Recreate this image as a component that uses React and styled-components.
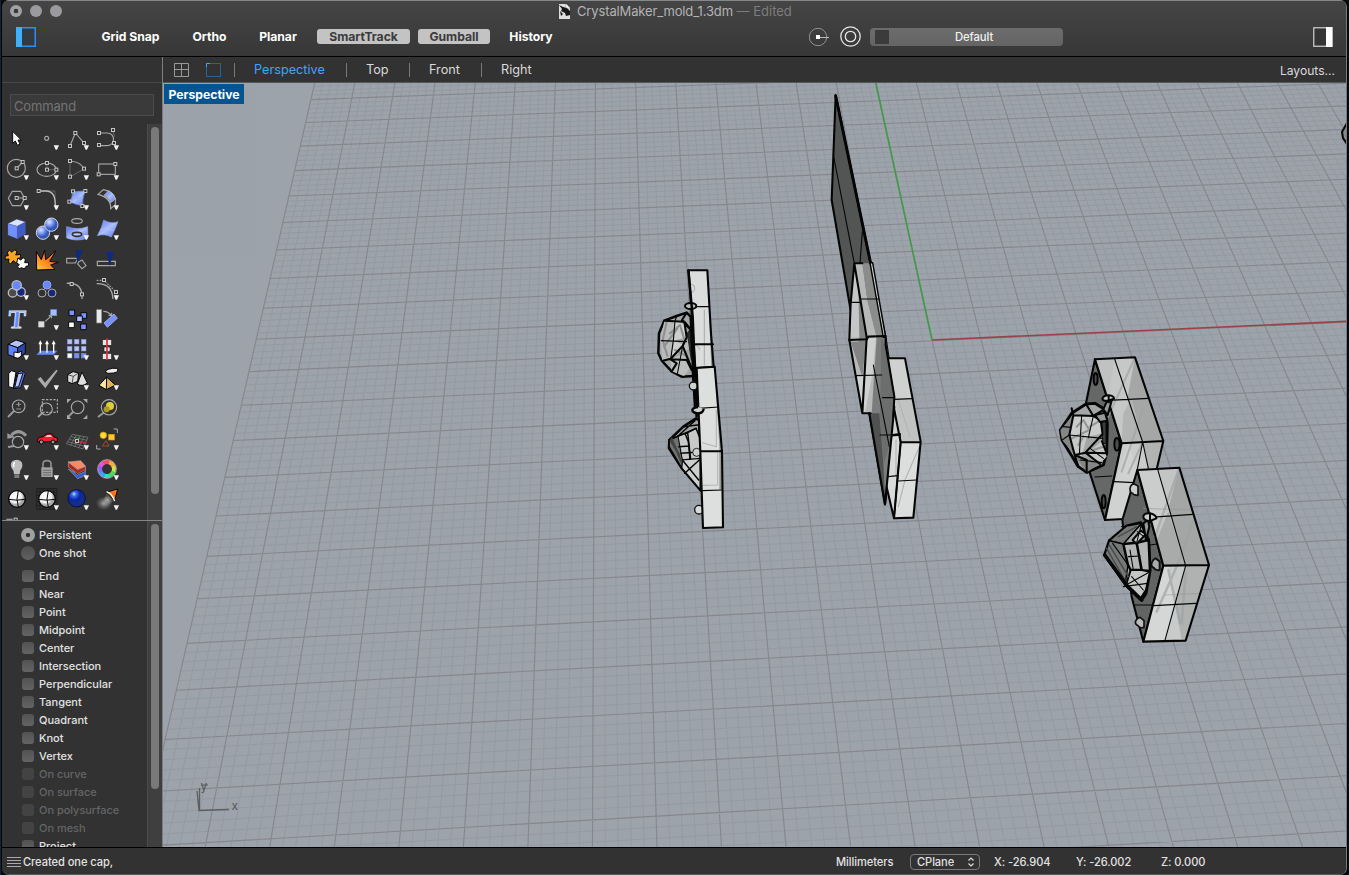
import React from "react";
import styled, { createGlobalStyle } from "styled-components";

const Global = createGlobalStyle`
  * { box-sizing: border-box; }
  body { margin: 0; background: #10151f; overflow: hidden; }
  body, button { font-family: Inter, "Liberation Sans", sans-serif; }
`;

const Desktop = styled.div`
  width: 1349px; height: 875px; padding: 0 2px 0 2px; overflow: hidden;
  background: linear-gradient(90deg, #13233b 0 1px, #0a0c10 1px);
`;
const Window = styled.div`
  width: 1345px; height: 875px; display: flex; flex-direction: column;
  background: #323232; border-radius: 7px; overflow: hidden;
  box-shadow: 0 0 0 1px #050505;
  border-bottom: 1px solid #5a5a5a; border-right: 1px solid #77797a;
`;
const Chrome = styled.header`
  height: 57px; flex: none; border-top: 1px solid #858888; border-bottom: 1px solid #000;
  background: linear-gradient(#454545, #373737);
`;
const TitleRow = styled.div`
  height: 20px; display: flex; align-items: center;
`;
const Lights = styled.div`display: flex; gap: 8px; padding-left: 8px;`;
const Light = styled.span`
  width: 12px; height: 12px; border-radius: 50%;
  background: ${(p) => (p.$dot ? "radial-gradient(circle, #38383a 0 2px, #a1a1a4 2.6px)" : "#9b9b9f")};
`;
const Title = styled.div`
  display: flex; align-items: center; height: 20px; margin-left: 496px; white-space: pre;
  font-size: 13px; letter-spacing: -0.14px; color: #b3b3b3;
  svg { margin-right: 6px; }
  span { color: #7d7d7d; letter-spacing: 0; }
`;
const ToolRow = styled.div`height: 31px; display: flex; align-items: center;`;
const Slot = styled.div`
  width: ${(p) => p.$w}px; margin-left: ${(p) => p.$gap || 0}px; height: 20px;
  display: flex; align-items: center; flex: none;
`;
const Toggle = styled.button`
  width: ${(p) => p.$w}px; margin: 0 0 0 ${(p) => p.$gap}px; flex: none; height: 15px; border: 0; padding: 0;
  border-radius: 3px; background: ${(p) => (p.$on ? "#c3c3c3" : "transparent")};
  color: ${(p) => (p.$on ? "#3b3b3b" : "#fff")};
  font-size: 12.2px; line-height: 15px; font-weight: 700; letter-spacing: -0.04px; white-space: nowrap;
`;
const LayerSelect = styled.div`
  width: 193px; height: 18px; margin-left: 9.5px; flex: none; border-radius: 4px; background: linear-gradient(#6c6c6c, #646464);
  display: flex; align-items: center; padding-left: 5px; font-size: 11.3px; font-weight: 500; color: #f0f0f0;
  i { width: 14px; height: 14px; background: #3b3b3b; }
  span { width: 170px; text-align: center; letter-spacing: -0.1px; }
`;
const Main = styled.div`display: flex; height: 790px; flex: none;`;
const Side = styled.aside`
  width: 161px; flex: none; display: flex; flex-direction: column; border-right: 1px solid #7d7d7d; background: #323232;
`;
const SideHead = styled.div`height: 26px; flex: none; border-bottom: 1px solid #484848;`;
const CommandArea = styled.div`height: 41px; flex: none; padding: 11px 8px 0 8px;`;
const Command = styled.div`
  width: 144px; height: 22px; border: 1px solid #4b4b4b; background: #3a3a3a; padding-left: 3px;
  color: #747474; font-size: 13px; line-height: 23px; letter-spacing: -0.15px;
`;
const ScrollPane = styled.div`
  height: ${(p) => p.$h}px; flex: none; display: flex; overflow: hidden;
  border-bottom: ${(p) => (p.$line ? "1px solid #858585" : "0")};
`;
const PaneBody = styled.div`width: 145px; flex: none; overflow: hidden;`;
const Track = styled.div`
  width: 15px; border-left: 1px solid #4c4c4c; background: #3f3f3f; padding: ${(p) => p.$top}px 0 0 3px;
`;
const Thumb = styled.div`width: 8px; height: ${(p) => p.$h}px; border-radius: 4px; background: #797979;`;
const IconGrid = styled.div`
  display: grid; grid-template-columns: repeat(4, 30px); grid-auto-rows: 30px;
  svg { display: block; }
`;
const Osnaps = styled.div`padding: 5px 0 0 19px;`;
const SnapRow = styled.div`
  height: 18px; margin-bottom: ${(p) => p.$after || 0}px; display: flex; align-items: center;
  font-size: 11px; line-height: 19px; font-weight: 500; letter-spacing: -0.03px; color: ${(p) => (p.$off ? "#656565" : "#e2e2e2")};
`;
const Box = styled.span`
  width: 12px; height: 12px; margin: 0 5px 0 1px; border-radius: 3px;
  background: ${(p) => (p.$off ? "#434343" : "linear-gradient(#525252, #646464)")};
`;
const Radio = styled.span`
  width: 14px; height: 14px; margin-right: 4px; border-radius: 50%;
  background: ${(p) => (p.$on ? "radial-gradient(circle, #2c2c2c 0 1.8px, #a0a0a0 2.5px)" : "linear-gradient(#4e4e4e, #616161)")};
`;
const Work = styled.section`width: 1183px; flex: none; display: flex; flex-direction: column;`;
const Tabs = styled.nav`
  height: 26px; flex: none; display: flex; align-items: center; background: #323232; border-bottom: 1px solid #55585a;
  color: #dadada; font-size: 12.7px;
  svg { flex: none; }
`;
const Tab = styled.span`
  width: ${(p) => p.$w}px; margin-left: ${(p) => p.$gap}px; flex: none; white-space: nowrap;
  color: ${(p) => (p.$on ? "#3aa7fb" : "#dadada")};
`;
const Sep = styled.span`width: 1px; height: 14px; margin-left: ${(p) => p.$gap}px; background: #777; flex: none;`;
const Layouts = styled.span`margin-left: auto; padding-right: 11px; font-size: 12.1px; padding-top: 2px;`;
const View = styled.div`position: relative; height: 764px; background: #9da3aa; svg { display: block; }`;
const ViewName = styled.div`
  position: absolute; left: 1px; top: 1px; width: 80px; height: 20px; background: #04548f; color: #fff;
  font-size: 12.2px; font-weight: 700; line-height: 21px; text-align: center; letter-spacing: 0;
`;
const Status = styled.footer`
  height: 28px; flex: none; border-top: 1px solid #000; background: #323232; display: flex; align-items: center;
  color: #e2e2e2; font-size: 11.1px; font-weight: 500; padding-left: 5px; padding-top: 1px; white-space: nowrap;
  letter-spacing: -0.06px;
`;
const Lines = styled.span`
  width: 14px; height: 11px; margin-right: 2px;
  background: repeating-linear-gradient(#a9a9a9 0 1px, transparent 1px 3px);
`;
const CPlane = styled.div`
  width: 70px; height: 16px; flex: none; border: 1px solid #7a7a7a; border-radius: 4px; display: flex; align-items: center;
  justify-content: space-between; padding: 0 4px 0 6px;
`;

/* ---- tool icons: 90 x 90 units in a 30px cell ---- */
const S = ({ x, y }) => <rect x={x - 4.5} y={y - 4.5} width="9" height="9" fill="#323232" stroke="#c4c4c4" strokeWidth="3" />;
const g = { fill: "none", stroke: "#a8a8a8", strokeWidth: 3.4 };
const dim = { fill: "none", stroke: "#6b6b6b", strokeWidth: 2.5 };
const k = { stroke: "#080808", strokeWidth: 3, strokeLinejoin: "round" };
const Lens = ({ x = 50, y = 37, r = 19 }) => (
  <g><path d={`M${x - r * 0.7} ${y + r * 0.7} L18 69`} stroke="#999" strokeWidth="6" /><circle cx={x} cy={y} r={r} {...g} /></g>
);

const icons = [
  [<path d="M32 22V58L40 51L46 64L54 60L48 48H58Z" fill="#fff" {...k} />, 0],
  [<circle cx="44" cy="43" r="6" {...g} />, 1],
  [<g><path d="M24 66L40 27L66 57" {...g} /><S x={24} y={66} /><S x={40} y={27} /><S x={66} y={57} /></g>, 1],
  [<g><path d="M26 27H46C70 27 72 64 44 65H26" {...g} /><path d="M62 20L68 38" {...dim} /><S x={21} y={27} /><S x={63} y={18} /><S x={21} y={63} /><S x={66} y={57} /></g>, 1],

  [<g><circle cx="43" cy="43" r="27" {...g} /><path d="M44 43L62 24" {...g} /><S x={44} y={43} /><S x={62} y={24} /></g>, 1],
  [<g><ellipse cx="44" cy="47" rx="29" ry="20" {...g} /><path d="M45 27V47H72" {...dim} /><S x={45} y={27} /><S x={45} y={47} /><S x={73} y={47} /></g>, 1],
  [<g><path d="M24 21C44 23 60 31 66 44" {...g} /><path d="M66 44L24 69V21" {...dim} /><S x={24} y={21} /><S x={66} y={44} /><S x={24} y={68} /></g>, 1],
  [<g><rect x="20" y="30" width="50" height="31" {...g} /><S x={70} y={30} /><S x={20} y={61} /></g>, 1],

  [<g><path d="M31 22H56L68 43L56 65H31L19 43Z" {...g} /><path d="M44 42H68" {...g} /><S x={44} y={42} /><S x={68} y={42} /></g>, 1],
  [<g><path d="M25 21H69V66" {...dim} /><path d="M25 21H42C64 22 70 38 70 66" fill="none" stroke="#bcbcbc" strokeWidth="4" /><S x={20} y={21} /></g>, 1],
  [<g><path d="M32 23L70 21Q60 42 62 66Q44 62 23 54Q32 40 32 23Z" fill="url(#blue)" stroke="#6f86ee" strokeWidth="2" /><path d="M29 38Q46 44 65 42M50 22Q46 45 42 61" stroke="#8ea5f8" strokeWidth="2" fill="none" /><S x={33} y={22} /><S x={70} y={21} /><S x={61} y={66} /><S x={22} y={53} /></g>, 1],
  [<g><path d="M18 31L34 17Q62 22 70 44V62L56 74Q58 42 18 31Z" {...g} /><path d="M36 34L50 20Q66 28 70 45L56 56Q52 42 36 34Z" fill="url(#blue)" stroke="#ccc" strokeWidth="2" /></g>, 1],

  [<g stroke="#5a6dba" strokeWidth="1"><path d="M18 29L44 16L70 24L46 37Z" fill="#dbe3ff" /><path d="M18 29L46 37V74L18 63Z" fill="#7390ff" /><path d="M46 37L70 24V60L46 74Z" fill="#3f5cc6" /></g>, 1],
  [<g stroke="#d7d7d7" strokeWidth="3"><circle cx="33" cy="56" r="20" fill="url(#ball)" /><circle cx="58" cy="32" r="20" fill="url(#ball)" /></g>, 1],
  [<g><ellipse cx="45" cy="21" rx="16" ry="7" {...g} /><path d="M14 38Q46 50 77 38V72Q46 84 14 72Z" fill="url(#blue)" stroke="#9eb0f7" strokeWidth="2" /><ellipse cx="45" cy="61" rx="14" ry="6" fill="#bfcaff" stroke="#333" strokeWidth="5" /></g>, 1],
  [<g><path d="M35 18Q56 31 78 23Q70 45 58 69Q37 58 16 65Q29 44 35 18Z" fill="url(#blue)" stroke="#8298f2" strokeWidth="2" /><path d="M24 46Q44 40 66 50" fill="none" stroke="#b4c3ff" strokeWidth="2" /></g>, 1],

  [<g {...k}><path d="M22 18l8 7 8-8 7 6-4 10 14-2 1 10-10 3 4 9-9 3-7-6-8 10-7-5 2-10-12 1 1-10 9-1-3-9Z" fill="#f5a623" /><path d="M48 42l8 6 8-7 6 6-2 9 11 0 1 9-8 2-5 8-8-4-8 3-4-6 5-6-8-5 2-8Z" fill="#fff" /></g>, 0],
  [<path d="M13 22L28 47L38 18L41 47L72 20L53 52L79 55L56 63L69 76L14 78Z" fill="url(#fire)" {...k} />, 0],
  [<g><path d="M14 43H48L40 57H14Z" {...g} /><path d="M50 54L60 48L72 65L60 74L47 60Z" {...g} /><path d="M40 18H64L46 56Z" fill="#102a7c" /></g>, 0],
  [<g><path d="M16 52H70V65H16Z" {...g} /><path d="M43 24H66L53 66Z" fill="#102a7c" /></g>, 0],

  [<g stroke="#bdbdbd" strokeWidth="4"><circle cx="32" cy="56" r="13" fill="#4b4b4b" /><circle cx="57" cy="54" r="13" fill="#16267b" /><circle cx="44" cy="34" r="14" fill="#6687ff" /></g>, 1],
  [<g stroke="#aaa" strokeWidth="3"><circle cx="45" cy="33" r="12" fill="#6687ff" stroke="#8ba3ff" /><circle cx="30" cy="57" r="12" fill="none" /><circle cx="60" cy="57" r="12" fill="#16267b" /></g>, 0],
  [<g><path d="M14 28C48 26 62 42 60 75" fill="none" stroke="#aaa" strokeWidth="4" /><S x={29} y={30} /><S x={60} y={61} /></g>, 0],
  [<g><path d="M14 29C50 29 61 46 63 75" fill="none" stroke="#aaa" strokeWidth="4" /><path d="M14 19H36L72 54V74" {...g} strokeDasharray="5 4" /><S x={36} y={18} /><S x={72} y={54} /></g>, 1],

  [<text x="49" y="72" textAnchor="middle" fontFamily="Liberation Serif, serif" fontWeight="bold" fontSize="78" fill="#668aff" stroke="#dfe6ff" strokeWidth="2.5" transform="skewX(-5)">T</text>, 0],
  [<g><path d="M40 52L59 34M59 34l-9 1m9-1l-1 9" {...g} /><rect x="19" y="52" width="18" height="18" fill="#ddd" /><rect x="56" y="17" width="18" height="18" fill="#a9bbff" stroke="#718df4" strokeWidth="2" /></g>, 1],
  [<g {...k} strokeWidth="3"><rect x="21" y="18" width="17" height="17" fill="#7693ff" /><rect x="57" y="26" width="17" height="17" fill="#7693ff" /><rect x="44" y="36" width="17" height="17" fill="#a9bcff" /><rect x="20" y="54" width="17" height="17" fill="#fff" /><rect x="56" y="60" width="17" height="17" fill="#7693ff" /></g>, 0],
  [<g><rect x="14" y="17" width="15" height="40" fill="#e9e9e9" stroke="#888" strokeWidth="2" /><path d="M34 22Q50 22 59 36M59 36v-10m0 10l-10-3" {...g} /><path d="M66 30L76 43L46 70L36 57Z" fill="#7790ff" stroke="#b9c5ff" strokeWidth="2" /></g>, 0],

  [<g {...k}><path d="M18 31L42 18L70 27L47 41Z" fill="#b2c2ff" /><path d="M18 31L47 41V73L18 62Z" fill="#5f82ff" /><path d="M47 41L70 27V57L47 73Z" fill="#2946a1" /><path d="M36 54L50 56L58 51V66L48 73L36 70Z" fill="#fff" /></g>, 1],
  [<g><path d="M13 62L25 50H76L66 62Z" fill="#6888ff" /><path d="M25 56V25M45 56V25M65 56V25" stroke="#fff" strokeWidth="4" /><path d="M19 31L25 19L31 31ZM39 31L45 19L51 31ZM59 31L65 19L71 31Z" fill="#fff" /></g>, 1],
  [<g>{[0, 1, 2].map((r) => [0, 1, 2].map((c) => <rect key={r * 3 + c} x={16 + c * 21} y={16 + r * 21} width="14" height="14" fill={r === 2 && c === 0 ? "#fff" : r === 2 ? "#7690f5" : "#b7c4f8"} stroke="#7f8ed0" strokeWidth="1.5" />))}</g>, 1],
  [<g><g fill="#e6e6e6" stroke="#222" strokeWidth="2"><rect x="31" y="17" width="28" height="17" /><rect x="36" y="39" width="18" height="14" /><rect x="31" y="58" width="28" height="18" /></g><path d="M45 13V78" stroke="#db2d36" strokeWidth="5" /></g>, 1],

  [<g {...k}><path d="M20 29L28 20L42 24L34 72L20 68Z" fill="#f5f5f5" /><path d="M46 26L58 20L70 28L56 71L34 74Z" fill="#5f80ff" /><path d="M48 29L63 27L50 68L38 70Z" fill="#b9c8ff" /></g>, 1],
  [<path d="M17 45L26 39L39 56L73 17L77 20L40 73Z" fill="#aaa" />, 1],
  [<g {...k}><path d="M17 32L33 23L50 27L47 52L30 59L17 53Z" fill="#d7d7d7" /><path d="M17 32L34 37L50 27M34 37L30 59" fill="none" strokeWidth="2" /><path d="M60 24L76 57Q60 70 46 60Z" fill="#ddd" /></g>, 1],
  [<g {...k}><path d="M39 24L48 16L62 13H77V23L65 27L48 28Z" fill="#eee" /><path d="M44 39L70 63L43 77L21 64Z" fill="#e0b44f" /><path d="M44 39L43 77L21 64Z" fill="#ffe59c" /></g>, 1],

  [<g><Lens /><path d="M43 31H57M50 24V38M43 45H57" {...g} strokeWidth="2.5" /></g>, 0],
  [<g><rect x="31" y="17" width="45" height="38" {...g} strokeDasharray="7 4" /><Lens x={43} y={45} r={18} /></g>, 0],
  [<g><Lens x={47} y={40} r={19} /><g fill="#aaa"><path d="M15 15H28L15 28Z" /><path d="M76 15H63L76 28Z" /><path d="M15 75H28L15 62Z" /><path d="M76 75H63L76 62Z" /></g></g>, 0],
  [<g><circle cx="54" cy="36" r="12" fill="#dccf3c" /><circle cx="44" cy="46" r="9" fill="#a99c23" /><Lens x={51} y={40} r={23} /></g>, 0],

  [<g><Lens x={48} y={54} r={17} /><path d="M28 33Q50 12 72 35" fill="none" stroke="#979797" strokeWidth="9" /><path d="M16 28L40 40L16 44Z" fill="#999" /></g>, 1],
  [<g {...k}><path d="M16 49Q18 38 33 39Q43 26 60 30L66 39L76 42V53L18 54Z" fill="#ef202b" /><path d="M39 39L46 33H56L60 39Z" fill="#f9c5c5" stroke="none" /><circle cx="28" cy="54" r="6" fill="#999" /><circle cx="63" cy="54" r="6" fill="#999" /></g>, 1],
  [<g stroke="#767676" strokeWidth="2.5" fill="none"><path d="M31 31L78 40L63 75L13 59ZM27 38L75 49M22 46L70 58M17 53L66 66M43 33L26 64M55 35L38 68M66 38L50 71" /><path d="M45 52L53 34" stroke="#16a02b" /><path d="M45 52L70 56" stroke="#cf2530" strokeWidth="4" /><S x={45} y={51} /></g>, 1],
  [<g><circle cx="34" cy="34" r="10" fill="#ffdb39" stroke="#b98b00" strokeWidth="2" /><rect x="50" y="31" width="17" height="17" fill="#ffc928" stroke="#e09a00" strokeWidth="2" /><path d="M42 50L51 66H31Z" fill="none" stroke="#a5482b" strokeWidth="3" /><path d="M65 15H76V27M14 63V75H26" fill="none" stroke="#aaa" strokeWidth="3" /></g>, 1],

  [<g><path d="M44 17C23 18 23 38 34 49L36 60H53L55 49C65 38 64 18 44 17Z" fill="#bdbdbd" /><path d="M38 25Q32 31 36 40" fill="none" stroke="#fff" strokeWidth="4" /><rect x="37" y="61" width="15" height="11" fill="#7b7b7b" /></g>, 1],
  [<g><path d="M33 44V29Q33 20 45 20Q57 20 57 29V44" fill="none" stroke="#8d8d8d" strokeWidth="5" /><rect x="28" y="40" width="34" height="29" fill="#a2a2a2" /><path d="M33 49H57M33 56H57M33 63H57" stroke="#6b6b6b" strokeWidth="3" /></g>, 1],
  [<g stroke="#bcbcbc" strokeWidth="1.5"><path d="M19 45L47 74L70 64V48L43 58Z" fill="#315ad4" /><path d="M19 32L45 64L70 52V40Z" fill="#161616" /><path d="M19 23L46 48L70 37V47L47 59L19 39Z" fill="#b12317" /><path d="M19 24L56 20L70 36L47 46Z" fill="#ff8963" /></g>, 1],
  [<g fill="none" strokeWidth="12">{["#ff4960", "#ef4fd2", "#8d61ff", "#439cff", "#29dec1", "#47db51", "#c7e844", "#ffac37"].map((c, i) => { const a = (-i * Math.PI) / 4 - 1.2, b = a - 0.85; return <path key={c} stroke={c} d={`M${45 + 21 * Math.cos(a)} ${45 + 21 * Math.sin(a)}A21 21 0 0 0 ${45 + 21 * Math.cos(b)} ${45 + 21 * Math.sin(b)}`} />; })}<circle cx="45" cy="45" r="28" stroke="#ddd" strokeWidth="2" /></g>, 1],

  [<g {...k} strokeWidth="4"><circle cx="45" cy="45" r="25" fill="url(#white)" /><path d="M20 46Q45 51 70 46M49 20Q41 45 49 70" fill="none" strokeWidth="3" /></g>, 0],
  [<g><path d="M14 14H75V76H14ZM24 14V76M34 14V76M54 14V76M65 14V76M14 24H75M14 34H75M14 54H75M14 65H75" fill="none" stroke="#181818" strokeWidth="2" /><g {...k} strokeWidth="4"><circle cx="45" cy="45" r="25" fill="url(#white)" /><path d="M20 46Q45 51 70 46M49 20Q41 45 49 70" fill="none" strokeWidth="3" /></g></g>, 1],
  [<circle cx="44" cy="43" r="26" fill="url(#deep)" stroke="#08103f" strokeWidth="3" />, 1],
  [<g><ellipse cx="36" cy="58" rx="24" ry="20" fill="url(#glow)" /><path d="M45 28L66 50L44 68L27 56Z" fill="url(#glow)" /><path d="M45 24L77 15L68 50Z" fill="url(#fire)" {...k} /><path d="M44 23Q60 30 68 51" stroke="#fff" strokeWidth="4" fill="none" /></g>, 1],
  [<g><path d="M13 16H32" stroke="#999" strokeWidth="4" /><S x={41} y={17} /></g>, 0],
];

const Defs = () => (
  <svg width="0" height="0" style={{ display: "block" }}>
    <defs>
      <linearGradient id="blue" x1="0" y1="0" x2="1" y2="1"><stop offset="0" stopColor="#4d70ed" /><stop offset=".5" stopColor="#aebfff" /><stop offset="1" stopColor="#5474e7" /></linearGradient>
      <linearGradient id="fire" x1="0" y1="1" x2="1" y2="0"><stop offset="0" stopColor="#ffd02d" /><stop offset=".6" stopColor="#ff681a" /><stop offset="1" stopColor="#ff9b2d" /></linearGradient>
      <radialGradient id="ball" cx=".35" cy=".3"><stop offset="0" stopColor="#dce5ff" /><stop offset=".5" stopColor="#85a0f7" /><stop offset="1" stopColor="#3559b9" /></radialGradient>
      <radialGradient id="white" cx=".4" cy=".35"><stop offset="0" stopColor="#fff" /><stop offset=".75" stopColor="#eee" /><stop offset="1" stopColor="#a5a5a5" /></radialGradient>
      <radialGradient id="deep" cx=".35" cy=".25"><stop offset="0" stopColor="#c8dcff" /><stop offset=".25" stopColor="#3c70ed" /><stop offset=".7" stopColor="#0824a9" /><stop offset="1" stopColor="#142d89" /></radialGradient>
      <radialGradient id="glow"><stop offset="0" stopColor="#bbb" stopOpacity=".9" /><stop offset="1" stopColor="#777" stopOpacity=".05" /></radialGradient>
    </defs>
  </svg>
);

const ToolIcon = ({ art, menu }) => (
  <svg width="30" height="30" viewBox="0 0 90 90">
    {art}
    {menu ? <path d="M65 64H81L75 77H71Z" fill="#f3f3f3" /> : null}
  </svg>
);

/* ---- construction plane in perspective ---- */
const horizon = -1172;
const rowVP = [34570, horizon];
const colPt = (u, y) => { const x0 = 314.3 + 40.17 * u; return 600.5 + ((x0 - 600.5) * (y - horizon)) / (84.5 - horizon); };
const rowStart = (v) => { const y = horizon + 72178 / (56.76 - v); return [colPt(0, y), y]; };
const rowY = (v, x) => { const [sx, sy] = rowStart(v); return sy + ((x - sx) * (rowVP[1] - sy)) / (rowVP[0] - sx); };

function gridPaths() {
  let minor = "", major = "";
  for (let i = 0; i <= 140; i++) {
    const u = i / 5;
    const d = `M${colPt(u, 60).toFixed(2)} 60L${colPt(u, 870).toFixed(2)} 870`;
    if (i % 5) minor += d; else if (u !== 14) major += d; else major += `M932 340L${colPt(14, 870).toFixed(2)} 870`;
  }
  for (let j = -15; j <= 110; j++) {
    const v = j / 5;
    const [sx, sy] = rowStart(v);
    const d = `M${sx.toFixed(2)} ${sy.toFixed(2)}L1360 ${rowY(v, 1360).toFixed(2)}`;
    if (j % 5) minor += d; else major += d;
  }
  return { minor, major };
}
const grid = gridPaths();

const P = ({ d, f = "none", w = 4, c = "#050505", o }) => (
  <path d={d} fill={f} stroke={w ? c : "none"} strokeWidth={w >= 5 ? w * 1.25 : w * 1.1} strokeLinejoin="round" strokeLinecap="round" opacity={o} />
);

const LeftMolds = () => (
  <g transform="translate(640 250) scale(.33333)">
    <P d="M140 188L110 198L73 212L57 250L55 310L66 333L95 364L125 380L160 378L152 200Z" f="#a3a5a6" w={6} />
    <P d="M73 214L105 213L100 272L92 328L66 330L62 260Z" f="#b9bbbb" w={0} />
    <P d="M105 213L131 222L140 262L100 272ZM100 272L140 288L92 328Z" f="#cdcece" w={0} />
    <P d="M92 328L128 312L153 350L132 378L95 364ZM140 262L152 290L128 312Z" f="#bdbebe" w={0} />
    <P d="M80 216L68 270L82 318M90 250L120 225L132 265M112 236L72 290M105 300L140 318" w={5} c="#8e9090" />
    <P d="M73 212L133 215L150 235M66 333L92 326L128 288L153 350M92 328L140 330L155 360M140 188L126 210L152 240M133 215L140 262L128 288M95 364L110 340L92 328" w={5} />
    <P d="M105 213L100 272L92 328M64 272L140 275M110 198L105 213M128 288L112 372" w={3} />
    <P d="M142 250L150 240L154 330L148 290Z" f="#111" w={3} o=".8" />
    <P d="M146 61L202 61L213 250L221 350L166 354Z" f="#dbdddd" w={0} />
    <P d="M202 61L221 350H214L207 180Z" f="#858787" w={0} />
    <P d="M193 180V345M150 103A12 12 0 1 1 154 127M160 285Q178 286 178 298" c="#acaeae" w={3} />
    <P d="M146 61L202 61L213 250L221 350L166 354Z" w={5} />
    <P d="M156 170H209" w={3} /><P d="M160 283H219" w={5} />
    <ellipse cx="152" cy="168" rx="17" ry="9" fill="#bbb" stroke="#050505" strokeWidth="6" />
    <P d="M145 61L158 200L170 500" w={6} />
    <P d="M161 352L169 485" w={11} />
    <circle cx="160" cy="408" r="12" fill="#cfd0d0" stroke="#111" strokeWidth="4" />
    <P d="M167 506L130 530L88 570L87 595L124 653L182 721L178 510Z" f="#a2a4a4" w={6} />
    <P d="M114 558L143 548L152 628L127 630L104 580ZM143 548L168 535L180 565V630L152 628Z" f="#c7c8c8" w={4} />
    <P d="M127 630L180 625V718L125 653Z" f="#cdcece" w={3} />
    <P d="M88 570L114 558L127 630L125 653L88 590Z" f="#707272" w={3} />
    <P d="M88 570L168 535M130 530L178 524M114 558L165 512M135 550L145 575L150 628M116 590L148 588M122 610L180 606M127 630L176 690M134 670L178 630" w={4} />
    <P d="M92 572L118 615M95 566L124 635" c="#444" w={5} />
    <circle cx="170" cy="607" r="12" fill="#cfd0d0" stroke="#222" strokeWidth="3" />
    <circle cx="177" cy="779" r="13" fill="#d8d9d9" stroke="#111" strokeWidth="4" />
    <P d="M170 354L224 350L246 604L249 832L189 834L181 604Z" f="#dddfdf" w={0} />
    <P d="M224 352L246 604L248 715L238 720V590Z" f="#969898" w={0} />
    <P d="M229 480V590L188 578M233 610V705L190 706" c="#b2b4b4" w={3} />
    <P d="M170 354L224 350L246 604L249 832L189 834L181 604Z" w={5} />
    <P d="M176 475L235 471M187 722L248 720" w={3} /><P d="M183 604H245" w={5} />
    <path d="M191 476Q190 490 174 490Q158 489 157 480Q160 472 174 471" fill="#d0d1d1" stroke="#050505" strokeWidth="7" />
  </g>
);

const MiddleMolds = () => (
  <g transform="translate(830 250) scale(.33333)">
    <P d="M17 -465L123 45L167 265L193 440L195 500L165 763L118 490L60 170L5 -150Z" f="#535555" w={5} />
    <P d="M10 -285L73 40M97 -55L90 40" w={3} />
    <P d="M17 -462L123 45" w={7} />
    <P d="M175 325L225 323L272 575L250 803L192 805L170 712L185 557L195 440Z" f="#cfd0d0" w={0} />
    <P d="M196 448L245 446L272 575L212 577Z" f="#c1c2c2" w={0} />
    <P d="M185 557L210 555L212 577L196 770L192 805L172 712Z" f="#d9dada" w={0} />
    <P d="M212 577L272 575L260 690L250 803H192Z" f="#dcdddd" w={0} />
    <P d="M205 450L240 560M268 590L225 690L205 770M198 570V680" c="#b2b4b4" w={3} />
    <P d="M175 325H225L272 575L250 803L192 805L170 712M212 577L192 805M212 577H272M193 480L212 577" w={5} />
    <P d="M192 448L245 446M205 693L260 690M175 680L202 677" w={3} /><P d="M183 556L210 552" w={5} />
    <P d="M73 40H97L123 45L167 265L193 440L185 555L165 735L150 560L122 490H97L58 270L62 160Z" f="#7b7d7d" w={0} />
    <P d="M118 490H148L160 640L165 763Z" f="#505252" w={0} />
    <P d="M73 40H97L112 150L140 260L125 490H97L58 270L62 160Z" f="#b7b9b9" w={0} />
    <P d="M97 40H118L140 150L160 260H140L112 150Z" f="#8b8d8d" w={0} />
    <P d="M73 40L100 200L110 262H58L62 160Z" f="#c5c6c6" w={0} />
    <P d="M85 110L110 262L82 330L88 262ZM110 262L97 380L62 275H82Z" f="#838585" w={0} />
    <P d="M78 378H105L97 490ZM110 262H138L128 370L105 490H97Z" f="#cfd0d0" w={0} />
    <P d="M154 260L165 285L193 440L188 555L162 640L150 500Z" f="#6c6e6e" w={0} />
    <P d="M120 38H128L167 262L160 262Z" f="#d0d2d2" w={4} />
    <P d="M73 40H97M73 40L62 160L58 270L97 490H122M73 40L110 262L97 490M167 265V285L193 440L190 500" w={5} />
    <P d="M58 270L110 268L115 260L167 258" w={5} />
    <P d="M62 157H91M92 147H146M78 377L155 375M158 443H193M150 555H205M130 345L178 590" w={3} />
    <P d="M118 490L165 763L193 470" w={5} />
    <P d="M185 557L210 555L212 577L192 805" w={4} />
  </g>
);

const RightMolds = () => (
  <g transform="translate(1040 340) scale(.33333)">
    <P d="M165 58L245 310L195 540L150 400L138 190Z" f="#666868" w={5} />
    <P d="M165 58L285 52L370 303L245 310Z" f="#c6c8c8" w={0} />
    <P d="M285 52L370 303H308L262 175Z" f="#a5a7a7" w={0} />
    <P d="M165 58L224 57L205 170L198 165Z" f="#c0c2c2" w={0} />
    <P d="M250 220L275 175L308 306H245Z" f="#b3b5b5" w={0} />
    <P d="M245 310L370 303L350 385L250 540L195 540Z" f="#cacccc" w={0} />
    <P d="M308 306L370 303L350 385L325 388Z" f="#b2b4b4" w={0} />
    <P d="M225 425L265 310L290 390L250 540H195Z" f="#d0d1d1" w={0} />
    <P d="M285 52L205 230M308 210L245 395M308 306L265 400" c="#a0a2a2" w={5} o=".7" />
    <P d="M165 58L285 52L370 303L350 388M245 310L370 303M165 58L245 310L195 540L250 537" w={5} />
    <P d="M224 57L308 306L325 385M205 181L326 175M222 425L282 428M165 411L215 408M308 306L292 388" w={3} />
    <g fill="#4b4d4d" stroke="#050505" strokeWidth="6">
      <ellipse cx="167" cy="117" rx="6" ry="18" /><ellipse cx="231" cy="313" rx="8" ry="19" /><ellipse cx="191" cy="485" rx="6" ry="20" />
    </g>
    <P d="M138 192L165 190L192 207L202 250L200 340L190 375L140 397L115 380L66 300L61 270L95 220Z" f="#a4a6a6" w={7} />
    <P d="M61 270L100 224L88 285L104 345L66 300ZM104 348L125 352L185 368L140 397Z" f="#858787" w={0} />
    <P d="M100 226L160 228L140 292L88 285ZM160 228L182 240L188 280L140 292Z" f="#cacbcb" w={0} />
    <P d="M88 285L140 292L125 350L104 345ZM135 345L186 304L200 350L185 365Z" f="#c6c8c8" w={0} />
    <P d="M110 260L130 240L148 270L95 295M115 315L130 290M150 260L175 245M160 330L190 320" c="#939595" w={5} />
    <P d="M100 226L160 228L182 240L188 282L136 338L104 345L88 285ZM100 226L95 205M138 192L160 228L190 210M104 345L115 380M104 345L140 360L140 397M136 338L180 372M136 338L200 340M186 304L200 340" w={5} />
    <P d="M66 300L88 285L188 295M125 226L118 345M160 228L145 293M120 360L185 368M150 325L190 355M70 260L92 262" w={3} />
    <P d="M186 250L196 235L200 310L188 310Z" f="#222" w={3} o=".8" />
    <P d="M165 225L195 218L202 242L180 246ZM200 185L215 182L203 225L190 208Z" f="#999" w={5} />
    <path d="M187 177Q190 166 206 166Q222 168 222 176L204 182Q189 184 187 177ZM206 166V190" fill="#ccc" stroke="#050505" strokeWidth="6" />

    <P d="M292 390L370 677L310 905L275 770L247 540Z" f="#626464" w={5} />
    <P d="M292 390L418 383L507 675L370 677Z" f="#c3c5c5" w={0} />
    <P d="M418 383L507 675H437L385 505Z" f="#a4a6a6" w={0} />
    <P d="M353 388L385 505L345 590L292 390Z" f="#cbcdcd" w={0} />
    <P d="M385 515L437 677H370L350 600Z" f="#a9abab" w={0} />
    <P d="M370 677L507 675L437 902L310 905Z" f="#c9cbcb" w={0} />
    <P d="M437 677L507 675L437 902H425L407 795Z" f="#b0b2b2" w={0} />
    <P d="M370 677H385L407 795L374 904H310Z" f="#d5d6d6" w={0} />
    <P d="M418 383L345 590M463 535L412 675L350 815M437 700L425 850M385 690L420 850" c="#a0a2a2" w={6} o=".7" />
    <P d="M310 505L450 510M375 765L480 760" c="#929494" w={3} o=".5" />
    <P d="M292 390L418 383L507 675L437 902L310 905L370 677L507 675M292 390L370 677" w={5} />
    <P d="M353 388L437 677L374 904M330 532L458 523M342 797L467 790M245 560L280 555M330 615L350 612M285 795H340" w={3} />
    <path d="M270 446Q272 432 283 432L294 438V466Q280 466 278 460Q270 458 270 446Z" fill="#cdcfcf" stroke="#111" strokeWidth="5" />
    <path d="M334 672Q338 658 347 655L359 664V690Q345 692 342 684Q334 682 334 672Z" fill="#aaa" stroke="#111" strokeWidth="6" />
    <path d="M286 846Q290 834 300 832L312 842V862Q298 866 294 857Q286 854 286 846Z" fill="#bbb" stroke="#111" strokeWidth="5" />
    <P d="M302 548L260 558L208 602L194 645L262 740L305 780L318 760L330 692L326 600Z" f="#a8aaaa" w={7} />
    <P d="M208 602L260 558L305 550L250 612Z" f="#777979" w={4} />
    <P d="M194 645L208 602L250 612L264 675L255 735Z" f="#777979" w={4} />
    <P d="M250 612L290 608L305 690H272L264 675ZM290 608L326 600L330 692H305Z" f="#b5b7b7" w={6} />
    <P d="M272 690H305L330 695L318 750L300 778L258 735Z" f="#c5c7c7" w={5} />
    <P d="M278 600L302 572L318 582L290 612Z" f="#ccc" w={5} />
    <P d="M218 610L268 680M250 612L305 550L290 608M265 650L300 648M270 630L280 690M292 575L312 590M250 740L322 730M258 735L330 695M275 710L310 750" w={3} />
    <P d="M208 615L265 710M200 625L260 730M235 590L290 560" c="#4a4c4c" w={4} />
    <P d="M194 645L262 738L305 780" w={9} />
    <P d="M310 550L324 540L328 560L318 600Z" f="#999" w={5} />
    <path d="M310 528Q314 518 330 520Q349 525 349 535L330 543Q310 543 310 528ZM330 520V550" fill="#ccc" stroke="#050505" strokeWidth="6" />
  </g>
);

const Scene = () => (
  <svg width="1183" height="764" viewBox="163 83 1183 764">
    <path d={grid.minor} stroke="#8e959d" strokeWidth="1" opacity=".58" />
    <path d={grid.major} stroke="#83848c" strokeWidth="1.1" opacity=".9" />
    <path d="M932 340L1347 321.4" stroke="#9a4248" strokeWidth="1.7" />
    <path d="M875.8 83L932 340" stroke="#439849" strokeWidth="1.7" />
    <LeftMolds />
    <MiddleMolds />
    <RightMolds />
    <path d="M1347 123L1342 132L1343 138L1347 144" fill="#888" stroke="#050505" strokeWidth="2" />
    <path d="M197 791L199 810.5L229 809.5M199.5 810V788" fill="none" stroke="#5b5d5f" strokeWidth="1.3" />
    <path d="M201 785H208" stroke="#5b5d5f" />
    <g fontFamily="Inter, sans-serif" fontSize="12" fill="#55585b">
      <text x="200.5" y="790">y</text><text x="231.5" y="810">x</text>
    </g>
  </svg>
);

const snaps = ["End", "Near", "Point", "Midpoint", "Center", "Intersection", "Perpendicular", "Tangent", "Quadrant", "Knot", "Vertex"];
const snapsOff = ["On curve", "On surface", "On polysurface", "On mesh"];

export default function App() {
  return (
    <Desktop>
      <Global />
      <Window>
        <Chrome>
          <TitleRow>
            <Lights><Light $dot /><Light /><Light /></Lights>
            <Title>
              <svg width="13" height="15" viewBox="0 0 13 15"><path d="M1 0H8L12 4V15H1Z" fill="#ddd" /><path d="M1 1L4 5L3 7L7 9L8 12L12 11V7L9 4L5 3ZM2 7L5 10L3 12Z" fill="#171717" /><path d="M8 0V4H12" fill="#fff" stroke="#888" strokeWidth=".5" /></svg>
              CrystalMaker_mold_1.3dm<span> — Edited</span>
            </Title>
          </TitleRow>
          <ToolRow>
            <Slot $w={20} $gap={14}>
              <svg width="20" height="20"><rect x=".75" y=".75" width="18.5" height="18.5" fill="#343a42" stroke="#2c8ff0" strokeWidth="1.5" /><rect width="6" height="20" fill="#3fb0ff" /></svg>
            </Slot>
            <Toggle $w={60} $gap={64.5}>Grid Snap</Toggle>
            <Toggle $w={36} $gap={31}>Ortho</Toggle>
            <Toggle $w={40} $gap={30.5}>Planar</Toggle>
            <Toggle $w={93} $gap={19} $on>SmartTrack</Toggle>
            <Toggle $w={72} $gap={8} $on>Gumball</Toggle>
            <Toggle $w={46} $gap={18}>History</Toggle>
            <Slot $w={20} $gap={255}>
              <svg width="20" height="20"><circle cx="9" cy="10" r="8.7" fill="none" stroke="#929292" /><path d="M9 10.5H20" stroke="#bbb" /><rect x="7" y="8" width="4" height="4" fill="#fff" /></svg>
            </Slot>
            <Slot $w={21} $gap={10.5}>
              <svg width="21" height="21"><g fill="none" stroke="#e5e5e5" strokeWidth="1.3"><circle cx="10.5" cy="10.5" r="9.7" /><circle cx="10.5" cy="10.5" r="5.2" /></g></svg>
            </Slot>
            <LayerSelect><i /><span>Default</span></LayerSelect>
            <Slot $w={20} $gap={250}>
              <svg width="20" height="20"><rect x=".75" y=".75" width="18" height="18.5" fill="#353535" stroke="#c7c7c7" strokeWidth="1.3" /><rect x="13" width="6.5" height="20" fill="#fff" /></svg>
            </Slot>
          </ToolRow>
        </Chrome>

        <Main>
          <Side>
            <SideHead />
            <CommandArea><Command>Command</Command></CommandArea>
            <ScrollPane $h={397} $line>
              <PaneBody>
                <IconGrid>{icons.map(([art, menu], i) => <ToolIcon key={i} art={art} menu={menu} />)}</IconGrid>
              </PaneBody>
              <Track $top={3}><Thumb $h={367} /></Track>
            </ScrollPane>
            <ScrollPane $h={326}>
              <PaneBody>
                <Osnaps>
                  <SnapRow><Radio $on />Persistent</SnapRow>
                  <SnapRow $after={5}><Radio />One shot</SnapRow>
                  {snaps.map((s) => <SnapRow key={s}><Box />{s}</SnapRow>)}
                  {snapsOff.map((s) => <SnapRow key={s} $off><Box $off />{s}</SnapRow>)}
                  <SnapRow><Box />Project</SnapRow>
                </Osnaps>
              </PaneBody>
              <Track $top={3}><Thumb $h={265} /></Track>
            </ScrollPane>
          </Side>

          <Work>
            <Tabs>
              <svg width="15" height="14" style={{ marginLeft: 11 }}><path d="M.5 .5H14.5V13.5H.5ZM7.5 0V14M0 6.5H15" fill="none" stroke="#999" /></svg>
              <svg width="15" height="14" style={{ marginLeft: 17 }}><rect x=".5" y=".5" width="14" height="13" fill="none" stroke="#2a6394" /><path d="M.5 4V.5H4" fill="none" stroke="#3ba5f5" /></svg>
              <Sep $gap={13} />
              <Tab $gap={19} $w={73} $on>Perspective</Tab>
              <Sep $gap={19} />
              <Tab $gap={19} $w={23}>Top</Tab>
              <Sep $gap={20} />
              <Tab $gap={19} $w={33}>Front</Tab>
              <Sep $gap={19} />
              <Tab $gap={19} $w={33}>Right</Tab>
              <Layouts>Layouts...</Layouts>
            </Tabs>
            <View>
              <Scene />
              <ViewName>Perspective</ViewName>
            </View>
          </Work>
        </Main>

        <Status>
          <Lines />
          <Slot $w={813}>Created one cap,</Slot>
          <Slot $w={74}>Millimeters</Slot>
          <CPlane>CPlane<svg width="8" height="10"><path d="M1.5 3.5L4 1L6.5 3.5M1.5 6.5L4 9L6.5 6.5" fill="none" stroke="#ddd" strokeWidth="1.2" /></svg></CPlane>
          <Slot $w={82} $gap={14}>X: -26.904</Slot>
          <Slot $w={85}>Y: -26.002</Slot>
          <Slot $w={60}>Z: 0.000</Slot>
        </Status>
        <Defs />
      </Window>
    </Desktop>
  );
}
